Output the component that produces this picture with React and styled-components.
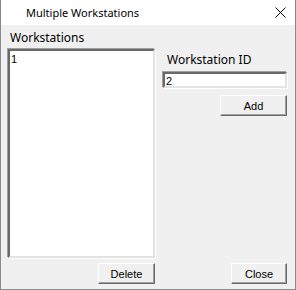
import styled, { createGlobalStyle } from "styled-components";

const GlobalStyle = createGlobalStyle`
  html, body {
    margin: 0;
    padding: 0;
    background: #ffffff;
  }
`;

const Window = styled.div`
  width: 296px;
  height: 290px;
  box-sizing: border-box;
  border: 1px solid #8a8a8a;
  border-top: none;
  display: flex;
  flex-direction: column;
  background: #f0f0f0;
  font-family: "Noto Sans", sans-serif;
  color: #000;
`;

const TitleBar = styled.div`
  height: 25px;
  flex: none;
  background: #ffffff;
  display: flex;
  align-items: center;
  padding-left: 25px;
  padding-right: 8px;
  font-size: 11px;
  box-sizing: border-box;
`;

const Title = styled.span`
  flex: 1;
  padding-bottom: 1px;
`;

const CloseX = styled.svg`
  width: 11px;
  height: 11px;
  margin-right: 1px;
`;

const Body = styled.div`
  flex: 1;
  display: flex;
  gap: 7px;
  padding: 6px 8px 5px 6px;
`;

const Column = styled.div`
  display: flex;
  flex-direction: column;
  width: ${(p) => p.$width}px;
`;

const Label = styled.div`
  font-size: 12px;
  line-height: 14px;
  height: 14px;
  padding-left: ${(p) => p.$indent || 0}px;
  margin-top: ${(p) => p.$top || 0}px;
`;

const sunken = `
  box-sizing: border-box;
  background: #ffffff;
  border-style: solid;
  border-width: 2px;
  border-color: #696969 #e3e3e3 #e3e3e3 #696969;
  box-shadow: -1px -1px 0 #a0a0a0, 1px 1px 0 #ffffff;
  font-family: "Liberation Sans", Arial, sans-serif;
  font-size: 11px;
`;

const ListBox = styled.div`
  ${sunken}
  margin-top: 4px;
  margin-left: 1px;
  height: 209px;
  padding: 2px 1px;
  line-height: 13px;
`;

const TextBox = styled.div`
  ${sunken}
  margin-top: 5px;
  margin-left: 1px;
  height: 16px;
  padding: 1px 1px;
  line-height: 12px;
`;

const Button = styled.div`
  box-sizing: border-box;
  align-self: flex-end;
  width: ${(p) => p.$width}px;
  height: 21px;
  margin-top: ${(p) => p.$top || 0}px;
  background: #f0f0f0;
  border-style: solid;
  border-width: 1px;
  border-color: #ffffff #696969 #696969 #ffffff;
  box-shadow: inset -1px -1px 0 #a0a0a0;
  display: flex;
  align-items: center;
  justify-content: center;
  font-family: "Liberation Sans", Arial, sans-serif;
  font-size: 11px;
  color: #000;
`;

const Spacer = styled.div`
  flex: 1;
`;

export default function App() {
  return (
    <>
      <GlobalStyle />
      <Window>
        <TitleBar>
          <Title>Multiple Workstations</Title>
          <CloseX viewBox="0 0 11 11">
            <path d="M0.5 0.5 L10.5 10.5 M10.5 0.5 L0.5 10.5" stroke="#000" strokeWidth="1" />
          </CloseX>
        </TitleBar>
        <Body>
          <Column $width={148}>
            <Label $indent={3}>Workstations</Label>
            <ListBox>1</ListBox>
            <Button $width={57} $top={5}>Delete</Button>
          </Column>
          <Column $width={125}>
            <Label $indent={5} $top={22}>Workstation ID</Label>
            <TextBox>2</TextBox>
            <Button $width={67} $top={7}>Add</Button>
            <Spacer />
            <Button $width={56}>Close</Button>
          </Column>
        </Body>
      </Window>
    </>
  );
}
